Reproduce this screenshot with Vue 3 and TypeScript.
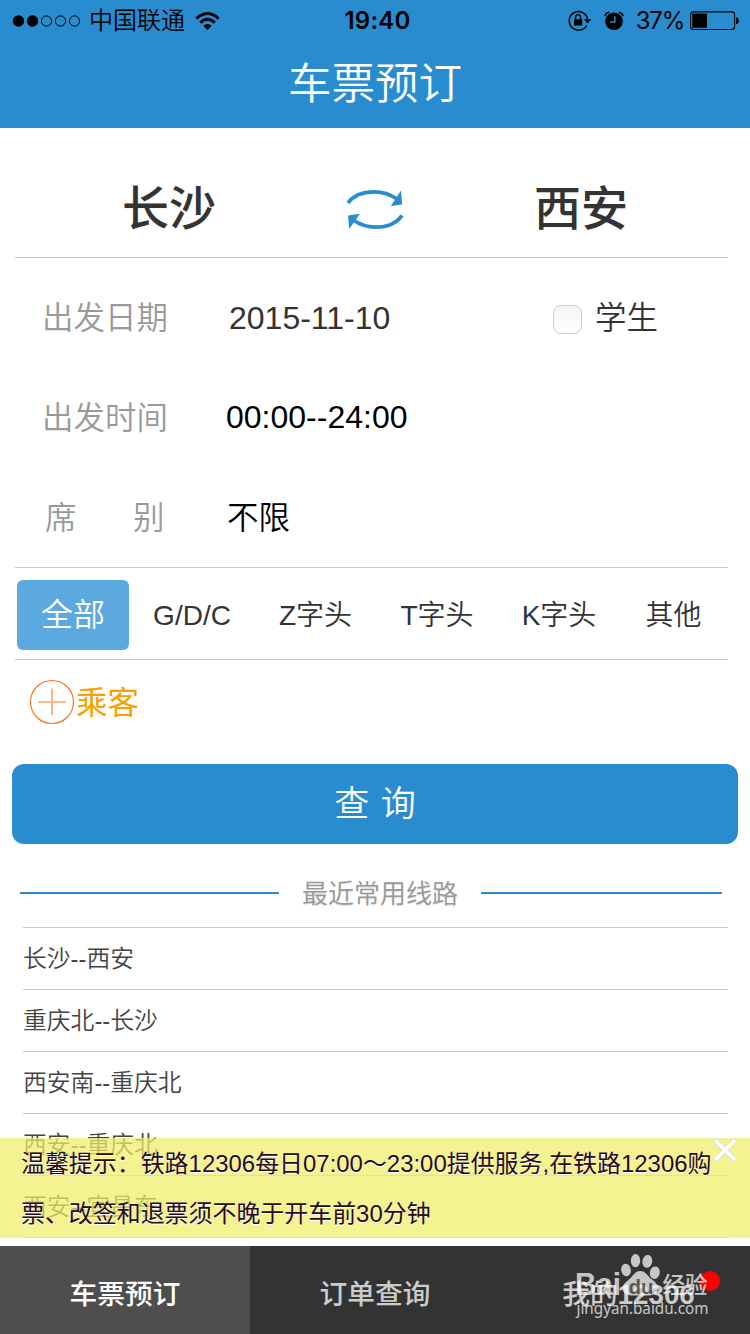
<script setup lang="ts">
const trainTypes: string[] = ['全部', 'G/D/C', 'Z字头', 'T字头', 'K字头', '其他']
const routes: string[] = ['长沙--西安', '重庆北--长沙', '西安南--重庆北', '西安--重庆北', '西安--宜昌东']
const signal: boolean[] = [true, true, false, false, false]
</script>

<template>
  <main class="screen">
    <header class="header">
      <div class="status">
        <div class="status-left">
          <svg class="dots" width="70" height="14" viewBox="0 0 70 14">
            <circle v-for="(on, i) in signal" :key="i" :cx="6.5 + i * 14" cy="7" :r="on ? 5.7 : 5.1"
              :fill="on ? '#000' : 'none'" :stroke="on ? 'none' : '#000'" stroke-width="1" />
          </svg>
          <span class="carrier">中国联通</span>
          <svg class="wifi" width="26" height="20" viewBox="0 0 26 20" fill="none" stroke="#000" stroke-width="2.9">
            <path d="M1.4 7.6Q12.5 -2.6 23.6 7.6" />
            <path d="M5.2 11.6Q12.5 4.8 19.8 11.6" />
            <path d="M8.3 14.8Q12.5 11 16.7 14.8L12.5 19Z" fill="#000" stroke="none" />
          </svg>
        </div>
        <span class="clock">19:40</span>
        <div class="status-right">
          <svg class="lock" width="24" height="22" viewBox="0 0 24 22">
            <path d="M18.7 15.3A9.3 9.3 0 1 1 19.6 9" fill="none" stroke="#000" stroke-width="1.5" />
            <path d="M16 9.2H23.4L19.7 13.5Z" />
            <rect x="6" y="9.2" width="8.2" height="6.2" rx=".6" />
            <path d="M7.6 9.5V7.4a2.5 2.8 0 0 1 5 0v2.1" fill="none" stroke="#000" stroke-width="1.4" />
          </svg>
          <svg class="alarm" width="20" height="20" viewBox="0 0 20 20">
            <circle cx="10" cy="10.2" r="8.8" />
            <path d="M1 5.2Q1.5 2 5.3 1.3M14.7 1.3Q18.5 2 19 5.2" fill="none" stroke="#000" stroke-width="1.5" />
            <path d="M10.8 5.2V11H6.2" fill="none" stroke="#298ccf" stroke-width="1.5" />
          </svg>
          <span class="percent">37%</span>
          <svg class="battery" width="50" height="20" viewBox="0 0 50 20">
            <rect x=".6" y=".9" width="44" height="17.6" rx="3" fill="none" stroke="#000" stroke-width="1.1" />
            <rect x="2.3" y="2.6" width="14.7" height="14.2" rx="1" />
            <path d="M46 6.2Q48.8 6.8 48.8 9.7Q48.8 12.6 46 13.2Z" />
          </svg>
        </div>
      </div>
      <h1 class="title">车票预订</h1>
    </header>

    <section class="cities">
      <strong class="city">长沙</strong>
      <svg class="swap" width="58" height="44" viewBox="0 0 58 44">
        <path d="M2 16Q10 4.9 28 4.9Q40 4.7 51 12" fill="none" stroke="#298ccf" stroke-width="3.8" />
        <path d="M55 3.5L56.2 17.5L44.8 19Z" fill="#298ccf" />
        <path d="M56 28.5Q48 40.1 30 40.1Q18 40.3 7 33" fill="none" stroke="#298ccf" stroke-width="3.8" />
        <path d="M3.2 42L2 28.5L14 26.8Z" fill="#298ccf" />
      </svg>
      <strong class="city">西安</strong>
    </section>

    <section class="form">
      <div class="row">
        <span class="label">出发日期</span>
        <span class="value date">2015-11-10</span>
        <span class="student"><i class="checkbox"></i>学生</span>
      </div>
      <div class="row">
        <span class="label">出发时间</span>
        <span class="value time">00:00--24:00</span>
      </div>
      <div class="row">
        <span class="label seat"><span>席</span><span>别</span></span>
        <span class="value kind">不限</span>
      </div>
    </section>

    <nav class="types">
      <span v-for="(type, i) in trainTypes" :key="type" class="type" :class="{ chosen: i === 0 }">{{ type }}</span>
    </nav>

    <div class="passenger">
      <svg width="46" height="46" viewBox="0 0 46 46" fill="none" stroke="#fa7420">
        <circle cx="23" cy="23" r="21.5" stroke-width="1.2" />
        <path d="M9 23H37M23 9.5V36" stroke-width="1.6" stroke="#fca26c" />
      </svg>
      <span>乘客</span>
    </div>

    <button class="search" type="button">查 询</button>

    <div class="recent">
      <i class="bar left"></i><span>最近常用线路</span><i class="bar right"></i>
    </div>
    <ul class="routes">
      <li v-for="route in routes" :key="route">{{ route }}</li>
    </ul>

    <footer class="bottom">
      <div class="notice">
        <p>温馨提示：铁路12306每日07:00～23:00提供服务,在铁路12306购</p>
        <p>票、改签和退票须不晚于开车前30分钟</p>
        <svg class="close" width="26" height="26" viewBox="0 0 26 26" stroke-linecap="round">
          <path d="M4 4L22 22M22 4L4 22" stroke="#c9c9b8" stroke-width="5" />
          <path d="M4 4L22 22M22 4L4 22" stroke="#fff" stroke-width="4" />
        </svg>
      </div>
      <nav class="tabs">
        <span class="tab active">车票预订</span>
        <span class="tab">订单查询</span>
        <span class="tab mine">我的<b>12306</b><i class="badge"></i></span>
      </nav>
      <svg class="mark" width="150" height="70" viewBox="0 0 150 70" fill="#fff">
        <g opacity=".72">
          <text class="mark-bold" x="11" y="41" font-size="31" textLength="46" lengthAdjust="spacingAndGlyphs">Bai</text>
          <ellipse cx="62" cy="16" rx="4.8" ry="6.3" transform="rotate(-10 62 16)" />
          <ellipse cx="71.5" cy="6.6" rx="4.7" ry="6.6" />
          <ellipse cx="83.3" cy="7.4" rx="4.9" ry="6.5" transform="rotate(10 83.3 7.4)" />
          <ellipse cx="90.8" cy="18.7" rx="4.9" ry="6.3" transform="rotate(12 90.8 18.7)" />
          <path d="M76.2 17C71 17 69 22 65 25.5C60 29.5 56 34 60 38.5C64 42.4 70 41.4 76.2 41.4C82.5 41.4 88.5 42.4 92.5 38.5C96 34 93.5 29.5 88 25.5C83.5 22 81.5 17 76.2 17Z" />
          <text class="mark-cjk" x="98.5" y="38.8" font-size="22.5">经验</text>
          <text class="mark-url" x="12.5" y="59.5" font-size="17" textLength="132" lengthAdjust="spacingAndGlyphs">jingyan.baidu.com</text>
        </g>
        <text class="mark-bold du" x="64.5" y="39.5" font-size="21" textLength="25" lengthAdjust="spacingAndGlyphs">du</text>
      </svg>
    </footer>
  </main>
</template>

<style>
body {
  margin: 0;
  background: #fff;
}
</style>

<style scoped>
.screen {
  position: relative;
  width: 750px;
  height: 1334px;
  overflow: hidden;
  background: #fff;
  color: #333;
  font-family: "Liberation Sans", "Noto Sans CJK SC", sans-serif;
}
.header {
  height: 128px;
  background: #298ccf;
}
.status {
  display: grid;
  grid-template-columns: 1fr 80px 1fr;
  height: 41px;
  align-items: center;
  color: #000;
  font: 24px/42px Inter, "Noto Sans CJK SC", sans-serif;
}
.status-left,
.status-right {
  display: flex;
  align-items: center;
  height: 41px;
}
.status-left { padding-left: 12px; }
.carrier {
  margin-left: 7px;
  font-weight: 350;
}
.wifi { margin-left: 10px; }
.clock {
  text-align: center;
  font-weight: 600;
  letter-spacing: .2px;
  padding-left: 5px;
}
.status-right {
  justify-content: flex-end;
  padding-right: 10px;
}
.lock,
.alarm,
.battery { margin-top: -1px; }
.alarm { margin-left: 12px; }
.percent { margin-left: 12px; letter-spacing: -1.2px; }
.battery { margin-left: 6px; }
.title {
  margin: 0;
  height: 87px;
  line-height: 86px;
  text-align: center;
  color: #fff;
  font-size: 43.5px;
  font-weight: 350;
}
.cities {
  display: grid;
  grid-template-columns: 308px 104px 308px;
  align-items: center;
  height: 129px;
  margin: 0 22px 0 15px;
  border-bottom: 1px solid #c8c8c8;
}
.city {
  padding-top: 32px;
  text-align: center;
  font-size: 47px;
  line-height: 64px;
  font-weight: 500;
  text-shadow: 0 1px 0 #f3f3f3;
}
.swap {
  margin: 33px 0 0 23px;
}
.form {
  height: 309px;
  margin: 0 22px 0 15px;
  border-bottom: 1px solid #c8c8c8;
}
.row {
  display: flex;
  height: 100px;
  align-items: center;
  padding-left: 27px;
  padding-top: 19px;
  box-sizing: border-box;
  font-size: 31.5px;
  line-height: 48px;
}
.label {
  width: 186px;
  color: #999;
  font-weight: 350;
}
.seat {
  display: flex;
  box-sizing: border-box;
  padding-left: 3px;
}
.seat span { width: 88px; }
.date {
  width: 323px;
  margin-left: 1px;
  font-size: 32px;
}
.time {
  margin-left: -2px;
  padding-bottom: 1px;
  font-size: 32px;
  color: #000;
}
.kind {
  margin-left: -1px;
  color: #000;
}
.kind,
.student { font-weight: 350; }
.student {
  display: flex;
  align-items: center;
}
.checkbox {
  width: 27px;
  height: 27px;
  margin: 3px 13px 0 1px;
  border: 1px solid #ccc;
  border-radius: 8px;
  background: linear-gradient(#f5f5f5, #fff);
}
.types {
  display: grid;
  grid-template-columns: 112px 126px 121px 122px 122px 107px;
  align-items: center;
  height: 91px;
  margin: 0 22px 0 15px;
  padding-left: 2px;
  border-bottom: 1px solid #c8c8c8;
}
.type {
  padding-top: 4px;
  text-align: center;
  font-size: 28px;
  font-weight: 350;
  line-height: 70px;
}
.chosen {
  height: 70px;
  margin-top: 3px;
  padding-top: 0;
  border-radius: 6px;
  background: #5ba9df;
  color: #fff;
  font-size: 32px;
}
.passenger {
  display: flex;
  align-items: center;
  height: 84px;
  padding-left: 29px;
  color: #f7a000;
  font-size: 31.5px;
}
.passenger span {
  margin-left: 1px;
  padding-bottom: 4px;
}
.search {
  display: block;
  width: 726px;
  height: 80px;
  margin: 20px 12px 0;
  padding: 0;
  border: 0;
  border-radius: 12px;
  background: #298ccf;
  color: #fff;
  font: 350 35px/80px "Liberation Sans", "Noto Sans CJK SC", sans-serif;
  word-spacing: 2px;
}
.recent {
  display: flex;
  align-items: center;
  height: 83px;
  margin: 0 28px 0 20px;
  color: #999;
  font-size: 26px;
  font-weight: 350;
  text-shadow: 0 1px 1px #ddd;
}
.recent span {
  width: 202px;
  padding-top: 11px;
  text-align: center;
}
.bar {
  height: 2px;
  margin-top: 15px;
  background: #298ccf;
}
.left { width: 259px; }
.right { width: 241px; }
.routes {
  margin: 0 22px 0 23px;
  padding: 0;
  list-style: none;
  border-top: 1px solid #c8c8c8;
}
.routes li {
  height: 61px;
  border-bottom: 1px solid #c8c8c8;
  color: #444;
  font-size: 23.8px;
  font-weight: 350;
  line-height: 61px;
}
.bottom {
  position: absolute;
  left: 0;
  right: 0;
  bottom: 0;
}
.notice {
  position: relative;
  box-sizing: border-box;
  height: 100px;
  margin-bottom: 8px;
  padding-top: 1px;
  background: rgba(240, 239, 103, .72);
  color: #2a0a1a;
  font-size: 23.95px;
  text-shadow: 0 1px 0 #fff;
}
.notice p {
  margin: 0;
  padding-left: 21px;
  line-height: 50px;
  white-space: nowrap;
}
.close {
  position: absolute;
  top: -1px;
  right: 12px;
}
.tabs {
  display: grid;
  grid-template-columns: 250px 250px 250px;
  height: 88px;
  background: #333;
}
.tab {
  height: 88px;
  text-align: center;
  color: #ccc;
  font-size: 27.7px;
  font-weight: 500;
  line-height: 98px;
}
.active {
  background: #4e4e4e;
  color: #fff;
}
.mine {
  position: relative;
  padding-left: 7px;
}
.badge {
  position: absolute;
  left: 200px;
  top: 25px;
  width: 20px;
  height: 20px;
  border-radius: 50%;
  background: #f00;
}
.mark {
  position: absolute;
  right: 36px;
  bottom: 10px;
  overflow: visible;
}
.mark-bold {
  font-family: "Liberation Sans", sans-serif;
  font-weight: 700;
}
.du {
  fill: #333;
  opacity: .75;
}
.mark-cjk {
  font-family: "Noto Sans CJK SC", sans-serif;
  font-weight: 500;
}
.mark-url {
  font-family: "Noto Sans", sans-serif;
}
</style>
